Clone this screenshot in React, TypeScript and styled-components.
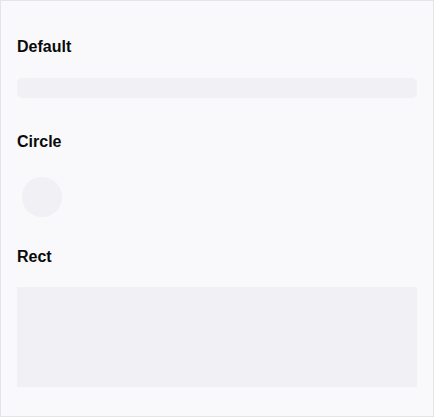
import React from "react";
import styled, { createGlobalStyle } from "styled-components";

const GlobalStyle = createGlobalStyle`
  html, body {
    margin: 0;
    padding: 0;
    background: #ffffff;
  }
  body {
    font-family: "Liberation Sans", Arial, sans-serif;
  }
`;

const Card = styled.div`
  box-sizing: border-box;
  width: 434px;
  height: 417px;
  border: 1px solid #e4e4ea;
  background: #f9f9fb;
  padding: 34px 16px 28px;
  display: flex;
  flex-direction: column;
`;

// $inner = space between title and skeleton, $after = space below the section
const Section = styled.section<{ $inner: number; $after?: number }>`
  display: flex;
  flex-direction: column;
  gap: ${(p) => p.$inner}px;
  margin-bottom: ${(p) => p.$after ?? 0}px;
`;

const Title = styled.h3`
  margin: 0;
  font-size: 16px;
  line-height: 24px;
  font-weight: 700;
  color: #0a0a0a;
`;

const Bone = styled.div<{ $h: number; $radius: number }>`
  width: 100%;
  height: ${(p) => p.$h}px;
  border-radius: ${(p) => p.$radius}px;
  background: #f0f0f5;
`;

const CircleHolder = styled.div`
  width: 50px;
  height: 50px;
  display: flex;
  align-items: center;
  justify-content: center;
`;

const CircleBone = styled.div`
  width: 40px;
  height: 40px;
  border-radius: 50%;
  background: #f0f0f5;
`;

export default function App() {
  return (
    <>
      <GlobalStyle />
      <Card>
        <Section $inner={19} $after={32}>
          <Title>Default</Title>
          <Bone $h={20} $radius={5} />
        </Section>
        <Section $inner={18} $after={23}>
          <Title>Circle</Title>
          <CircleHolder>
            <CircleBone />
          </CircleHolder>
        </Section>
        <Section $inner={18}>
          <Title>Rect</Title>
          <Bone $h={100} $radius={0} />
        </Section>
      </Card>
    </>
  );
}
